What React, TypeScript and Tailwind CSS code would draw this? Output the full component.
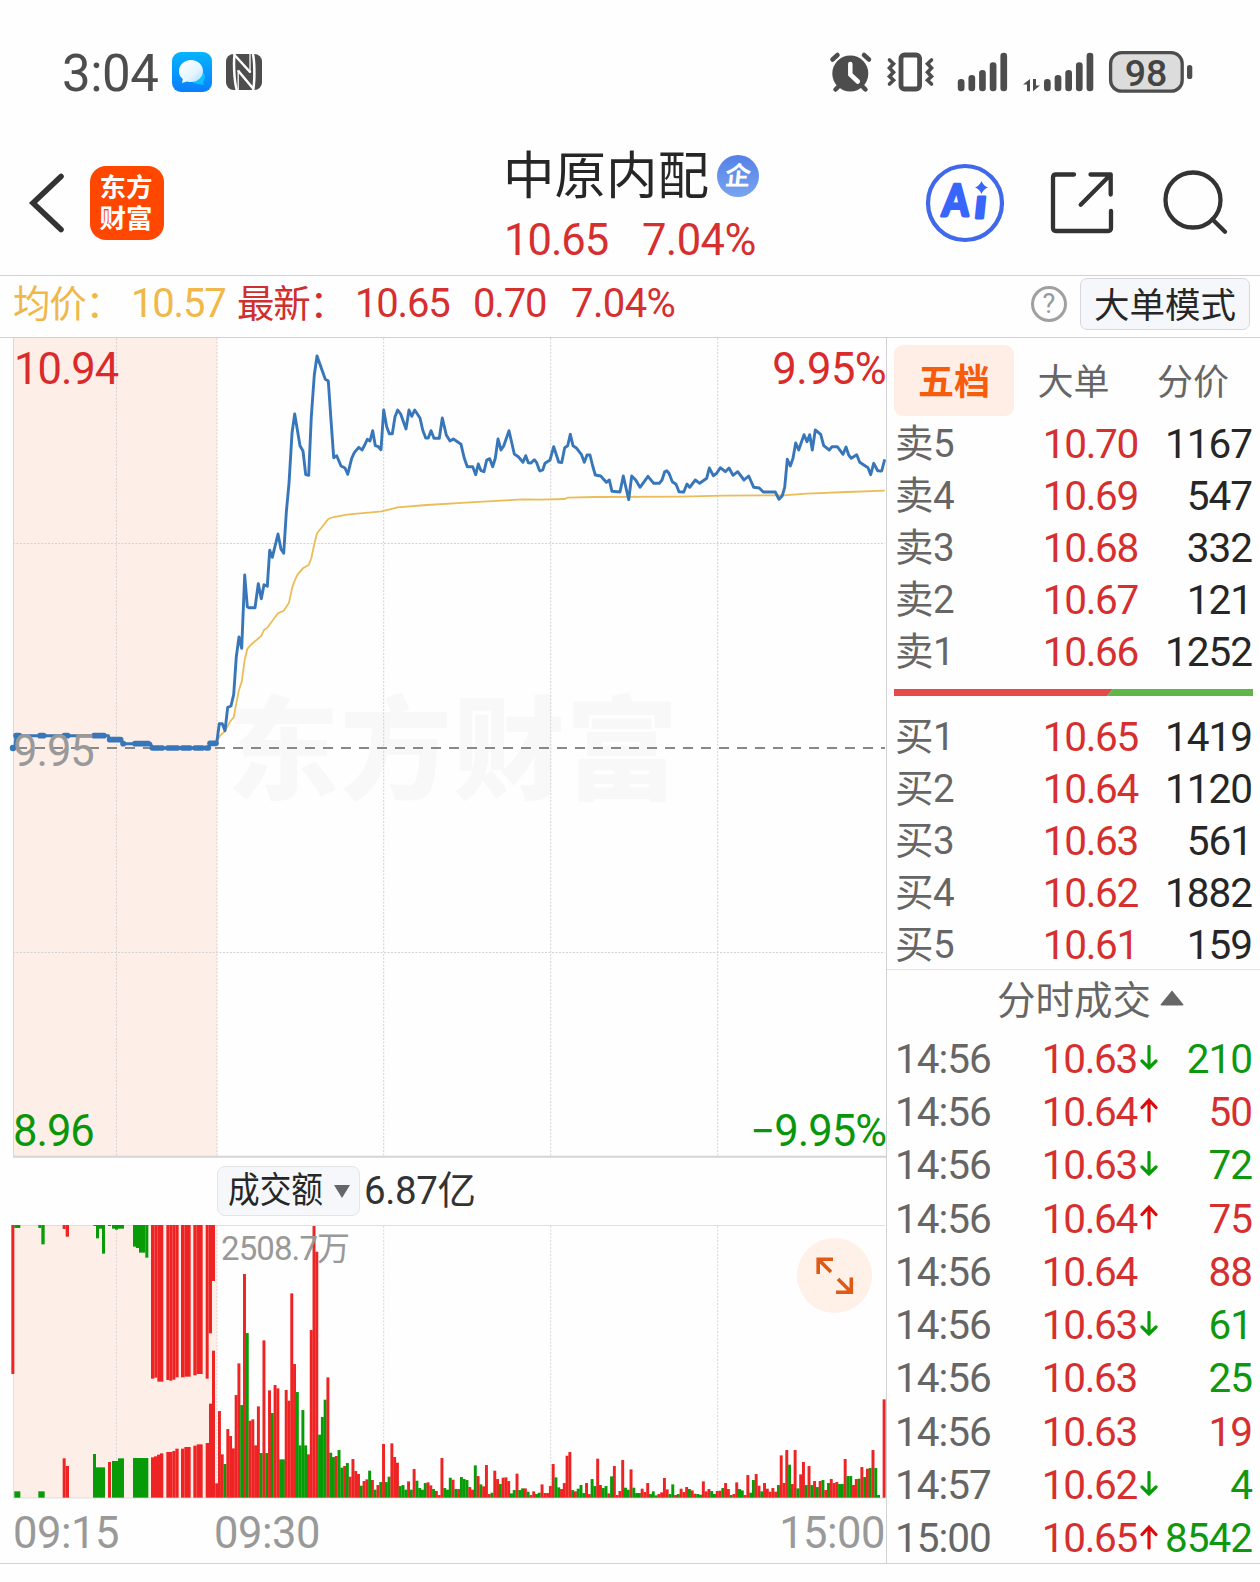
import React from 'react';

type Side = 'r' | 'g';

const RED = '#ee2424';
const GREEN = '#079c07';

/* ---------- price series: pairs measured in thirds of a pixel ---------- */

const OPEN_PRICE =
  '50,1209 58,1151 67,1151 75,1172 83,1102 93,1098 101,1063 109,950 117,891 125,925 134,705 142,800 147,803 165,803 175,731 184,776 192,734 202,739 209,631 217,652 234,582 243,628 251,640 259,517 267,430 276,280 284,222 300,317 309,333 317,404 326,406 334,230 343,105 351,48 376,118 385,123 393,240 401,353 410,347 423,378 435,384 443,403 455,355 463,338 476,322 486,330 494,315 502,298 510,303 518,272 526,317 535,320 543,329 551,210 560,260 568,281 577,281 585,230 593,210 602,222 618,267 627,210 635,229 644,210 660,234 668,270 677,294 685,294 693,272 702,295 718,295 727,234 739,285 750,303 760,297 770,304 783,313 793,355 802,380 818,380 827,404 835,372 843,392 852,395 860,360 869,356 878,380 886,355 894,297 903,330 911,318 927,272 943,342 955,350 969,367 977,347 985,368 993,369 1003,359 1010,368 1018,390';
const LATE_PRICE =
  '0,213 8,210 15,190 30,180 41,140 56,186 65,188 74,143 83,137 91,103 99,137 110,145 124,163 133,187 141,165 150,165 158,198 166,225 182,228 199,247 208,240 216,274 240,276 250,228 266,299 275,228 287,240 300,262 324,229 341,250 358,250 366,240 374,215 380,212 387,220 397,245 408,253 417,275 431,276 441,252 449,262 466,240 479,250 500,235 508,204 520,227 530,220 541,203 556,215 567,204 579,226 593,215 612,240 626,228 641,262 658,264 670,276 706,276 717,298 727,287 734,262 742,178 751,198 759,175 767,129 776,150 792,104 801,125 809,104 817,150 826,90 842,103 851,137 868,150 876,140 892,140 909,163 918,141 926,165 934,175 950,164 959,187 984,203 992,224 1001,190 1013,212 1025,213 1034,178';
const OPEN_AVG =
  '50,1205 60,1187 76,1172 90,1145 101,1132 109,1090 117,1050 125,1025 134,960 142,927 155,912 184,888 192,870 202,863 234,820 251,812 267,788 276,745 284,722 293,703 309,685 326,675 334,655 343,612 351,580 385,537 401,531 440,524 545,514 593,502 680,495 810,487 970,478';
const LATE_AVG = '0,299 74,297 83,293 166,291 420,290 550,287 730,286 800,281 920,276 1034,272';

const place = (pairs: string, x0: number, y0: number) =>
  pairs
    .split(' ')
    .map((p) => {
      const [x, y] = p.split(',').map(Number);
      return `${(x0 + x / 3).toFixed(1)},${(y0 + y / 3).toFixed(1)}`;
    })
    .join(' ');

const priceLine = place(OPEN_PRICE, 200, 340) + ' ' + place(LATE_PRICE, 540, 400);
const avgLine = place(OPEN_AVG, 200, 340) + ' ' + place(LATE_AVG, 540, 400);
const auctionLine = place(
  '45,264 48,227 325,227 329,239 363,239 370,251 452,251 457,264 625,264 630,250 652,250',
  0,
  660,
);
const auctionDots: [number, number, number][] = [
  [48, 58, 227], [120, 131, 227], [193, 203, 227], [282, 312, 227], [329, 362, 239], [369, 370, 251],
  [405, 445, 251], [457, 487, 264], [503, 533, 264], [547, 570, 264], [585, 608, 264], [619, 625, 264], [630, 648, 250],
];

/* ---------- volume bars ---------- */

const MORNING =
  'r1000 r783 r913 g942 r837 r858 r895 r735 r640 g765 r372 g549 r812 r808 r886 r769 g909 r571 g909 r721 g789 r705 r715 g928 g928 r720 r752 r430 r642 g726 g886 g780 g886 r913 r540 r228 r305 g854 g801 g749 r682 g908 g921 r918 g900 g953 r948 g939 r980 r927 r963 r972 g1007 r993 r988 g962 r990 g1019 r1005 g996 r882 g996 g980 r880 r921 r938 g1008 g1005 g1019 r994 g1019 r957 g992 g1014 g1019 g999 r997 r1006 g1017 r1023 r1035 r924 g1014 g1019 g983 r989 g1017 r1017 g981 g987 g990 r1011 r1019 g946 r978 g1003 r1009 r945 r1032 g1028 r962 r987 g1002 r983 r982 r993 g1030 g1020 r971 g1020 g1015 r1015 g1025 r1035';
const AFTERNOON =
  'r874 g882 g878 r853 r879 r879 r858 r792 g832 g862 r867 r849 r767 r756 g870 r874 g866 g855 g879 r849 r882 g837 g858 r776 r855 g864 g858 r880 g829 r798 r885 r873 r780 g863 g869 r808 g863 g879 g879 r866 r876 r849 g882 g874 g886 r882 r877 r834 r868 g882 g853 r885 g882 r866 r876 r861 g867 r871 r881 g882 g884 r844 r874 r867 g873 g882 r873 r872 g864 r849 r867 g885 r882 r847 g867 g871 r885 r825 g878 g840 r822 r857 g874 r849 r866 r875 r864 r875 g855 r766 r849 r750 g794 r852 r750 g865 r823 r786 g855 r798 g855 r843 g861 r843 g840 r870 g849 r837 r849 r846 g852 g852 r777 g828 g828 r855 r837 g836 r801 g831 r806 g804 r750 g804 g885 r893 r598';

const parse = (s: string, base: number) =>
  s.split(' ').map((t) => ({ side: t[0] as Side, h: (base - Number(t.slice(1))) / 3 }));
const bars = [...parse(MORNING, 1043), ...parse(AFTERNOON, 893)];

/* auction: [left, right, edge, side] in thirds of a pixel */
const HANGING: [number, number, number, Side][] = [
  [34, 43, 672, 'r'], [43, 61, 234, 'g'], [115, 124, 234, 'g'], [124, 134, 283, 'g'], [188, 197, 237, 'r'], [197, 207, 260, 'r'],
  [280, 288, 228, 'g'], [288, 297, 265, 'g'], [297, 306, 236, 'g'], [306, 315, 311, 'g'], [324, 333, 228, 'r'], [336, 345, 236, 'g'],
  [345, 354, 239, 'g'], [354, 372, 236, 'g'], [399, 408, 290, 'g'], [408, 417, 294, 'g'], [417, 436, 308, 'g'], [436, 445, 323, 'g'],
  [453, 463, 686, 'r'], [463, 472, 683, 'r'], [472, 490, 695, 'r'], [499, 508, 690, 'r'], [508, 517, 692, 'r'], [517, 526, 689, 'r'],
  [526, 536, 682, 'r'], [543, 554, 682, 'r'], [554, 572, 680, 'r'], [580, 590, 676, 'r'], [590, 608, 672, 'r'], [617, 626, 686, 'r'],
  [626, 636, 550, 'r'], [636, 645, 393, 'r'],
];
const STANDING: [number, number, number, Side][] = [
  [43, 61, 1024, 'g'], [115, 134, 1024, 'g'], [188, 197, 925, 'r'], [197, 207, 948, 'r'], [279, 288, 912, 'g'], [288, 315, 952, 'g'],
  [324, 333, 936, 'r'], [336, 354, 933, 'g'], [354, 372, 925, 'g'], [399, 445, 924, 'g'], [453, 462, 922, 'r'], [462, 471, 919, 'r'],
  [471, 480, 914, 'r'], [480, 490, 910, 'r'], [499, 517, 906, 'r'], [517, 526, 903, 'r'], [526, 536, 896, 'r'], [543, 553, 896, 'r'],
  [553, 572, 891, 'r'], [580, 590, 887, 'r'], [590, 608, 883, 'r'], [617, 627, 879, 'r'], [627, 636, 761, 'r'], [636, 645, 602, 'r'],
];

const asks = [
  ['卖5', '10.70', '1167'], ['卖4', '10.69', '547'], ['卖3', '10.68', '332'], ['卖2', '10.67', '121'], ['卖1', '10.66', '1252'],
];
const bids = [
  ['买1', '10.65', '1419'], ['买2', '10.64', '1120'], ['买3', '10.63', '561'], ['买4', '10.62', '1882'], ['买5', '10.61', '159'],
];
const ticks: [string, string, '' | 'up' | 'down', string, Side][] = [
  ['14:56', '10.63', 'down', '210', 'g'],
  ['14:56', '10.64', 'up', '50', 'r'],
  ['14:56', '10.63', 'down', '72', 'g'],
  ['14:56', '10.64', 'up', '75', 'r'],
  ['14:56', '10.64', '', '88', 'r'],
  ['14:56', '10.63', 'down', '61', 'g'],
  ['14:56', '10.63', '', '25', 'g'],
  ['14:56', '10.63', '', '19', 'r'],
  ['14:57', '10.62', 'down', '4', 'g'],
  ['15:00', '10.65', 'up', '8542', 'g'],
];

/* ---------- status bar ---------- */

function SignalBars({ x }: { x: number }) {
  const tops = [79, 75, 70, 62.3, 52.7];
  return (
    <g fill="#4d4d4d">
      {tops.map((t, i) => (
        <rect key={i} x={x + i * 10.65} y={t} width="6.7" height={91.3 - t} rx="3.2" />
      ))}
    </g>
  );
}

function StatusBar() {
  return (
    <div className="flex h-[132px] items-start justify-between pt-[43px] pl-[62px] pr-[62px]">
      <div className="flex items-center">
        <span className="w-[110px] pt-[2px] text-[51px] leading-[58px] tracking-[-0.5px] text-[#4d4d4d]">3:04</span>
        <svg width="40" height="40" viewBox="0 0 40 40" className="mb-[3px]">
          <defs>
            <linearGradient id="msg" x1="0" y1="0" x2="0" y2="1">
              <stop offset="0" stopColor="#06b4fd" />
              <stop offset="1" stopColor="#0a7dfb" />
            </linearGradient>
            <linearGradient id="bubble" x1="0" y1="0" x2="1" y2="1">
              <stop offset="0" stopColor="#ffffff" />
              <stop offset="0.6" stopColor="#e6f5ff" />
              <stop offset="1" stopColor="#a5dcff" />
            </linearGradient>
          </defs>
          <rect width="40" height="40" rx="9" fill="url(#msg)" />
          <path d="M31 20a8 8 0 0 1 0 10l1 3-5-1c-3 0-6-1-8-3z" fill="#0cc0ff" />
          <path d="M19 8c7 0 12 5 12 11s-5 11-12 11c-1.500 0-2.500 0-4-.5L10 31l.8-4C8 25 7 22 7 19 7 13 12 8 19 8z" fill="url(#bubble)" />
        </svg>
        <svg width="36" height="36" viewBox="0 0 36 36" className="mb-[3px] ml-[14px]">
          <rect width="36" height="36" rx="7.500" fill="#4d4d4d" />
          <g fill="none" stroke="#fff" strokeWidth="2.500">
            <path d="M8.500 0C7.600 9 8 27 10.800 36" />
            <path d="M27 0C28.800 9 28.800 27 27.200 36" />
            <path d="M8.500 1L24.500 18.500M12 16.500L27.500 35" />
            <path d="M12.200 16V36M24 0V19" strokeWidth="1.300" />
          </g>
        </svg>
      </div>
      <svg width="370" height="56" viewBox="828 43 370 56">
        <g stroke="#4d4d4d" strokeLinecap="round" fill="none">
          <circle cx="850.300" cy="73.500" r="18" fill="#4d4d4d" stroke="none" />
          <path d="M832.500 59.500l5-4.500M869 59.500l-5-4.500" strokeWidth="4.500" />
          <path d="M839 86l-3.500 3.500M862 86l3.500 3.500" strokeWidth="4.500" />
          <path d="M850.300 64v10.500l7.500 7" stroke="#fff" strokeWidth="4.500" />
          <rect x="901" y="55" width="18.600" height="34" rx="3.500" strokeWidth="4.800" />
          <path d="M889.500 60l4 3.800-4 4.200 4 4.200-4 4.200 4 3.800-4 3.800M931.500 60l-4 3.800 4 4.200-4 4.200 4 4.200-4 3.800 4 3.800" strokeWidth="3.600" />
        </g>
        <SignalBars x={957.8} />
        <SignalBars x={1044} />
        <g fill="#4d4d4d">
          <path d="M1030 79V91.300h-3V84.500h-4z" />
          <path d="M1033 79h3v6.500h4L1033 91.300z" />
        </g>
        <rect x="1110.600" y="52.600" width="71.600" height="38.600" rx="11" fill="#dcdcdc" stroke="#4d4d4d" strokeWidth="3.300" />
        <rect x="1187" y="65" width="5.300" height="14" rx="2.600" fill="#4d4d4d" />
        <text x="1146" y="86" textAnchor="middle" fontSize="37.500" fontWeight="500" fill="#444" fontFamily="Roboto">
          98
        </text>
      </svg>
    </div>
  );
}

/* ---------- title bar ---------- */

function TitleBar() {
  return (
    <header className="grid h-[144px] grid-cols-[1fr_auto_1fr] border-b border-[#d0d1d3]">
      <div className="flex items-start pt-[34px] pl-[28px]">
        <svg width="38" height="74" viewBox="28 166 38 74" className="mr-[24px]">
          <path d="M61 176.500L33 203l28 26.500" fill="none" stroke="#333" strokeWidth="5.600" strokeLinecap="round" />
        </svg>
        <div className="flex h-[74px] w-[74px] flex-col items-center justify-center rounded-[16px] bg-[#ff4700] pr-[2px] text-[26.5px] leading-[31.5px] font-bold text-white">
          <span>东方</span>
          <span>财富</span>
        </div>
      </div>
      <div className="flex w-[254px] flex-col pt-[12px]">
        <div className="flex items-center">
          <h1 className="text-[51.5px] leading-[66px] whitespace-nowrap text-[#262626]">中原内配</h1>
          <span className="mb-[3px] ml-[8px] flex h-[42px] w-[42px] shrink-0 items-center justify-center rounded-full bg-linear-to-b from-[#5580e6] to-[#78a4ef] text-[26px] leading-none font-bold text-white">
            <span className="-skew-x-6">企</span>
          </span>
        </div>
        <div className="mt-[3px] flex pl-[1px] text-[43.5px] leading-[56px] tracking-[-1px] text-[#d62f2f]">
          <span className="w-[138px]">10.65</span>
          <span className="tracking-[-0.6px]">7.04%</span>
        </div>
      </div>
      <svg width="316" height="90" viewBox="918 158 316 90" className="mt-[26px] mr-[26px] justify-self-end">
        <circle cx="965" cy="203" r="37" fill="none" stroke="#3f68ea" strokeWidth="4.200" />
        <g fill="#3866fb" stroke="#3866fb" strokeWidth="2.800" strokeLinejoin="round" fontFamily="Lato" fontWeight="900">
          <text transform="translate(941.500 216) skewX(-4) scale(0.880 1.020)" fontSize="43">A</text>
          <text transform="translate(973.500 218) skewX(-6) scale(1.100 1)" fontSize="41">ı</text>
        </g>
        <path d="M981.500 181q1.800 4.700 6.500 6.500-4.700 1.800-6.500 6.500-1.800-4.700-6.500-6.500 4.700-1.800 6.500-6.500z" fill="#3866fb" />
        <g fill="none" stroke="#333" strokeWidth="4.300" strokeLinecap="round" strokeLinejoin="round">
          <path d="M1074 174.500h-18q-3 0-3 3V228q0 3 3 3h52q3 0 3-3v-17" />
          <path d="M1090.500 174.500H1110.700V194.500M1110.700 174.500L1080.700 204.700" />
          <circle cx="1193" cy="200" r="27.500" />
          <path d="M1212.300 219.300L1225 231.700" />
        </g>
      </svg>
    </header>
  );
}

function InfoRow() {
  return (
    <div className="flex h-[62px] items-center justify-between border-b border-[#d0d1d3] pr-[10px] pl-[13px] whitespace-nowrap">
      <div className="flex pb-[5px] text-[40px] leading-[54px] tracking-[-1.2px]">
        <span className="w-[118px] text-[37.5px] text-[#f0b84a]">均价：</span>
        <span className="w-[106px] text-[#f0b84a]">10.57</span>
        <span className="w-[118px] text-[37.5px] text-[#d02f2f]">最新：</span>
        <span className="w-[118px] text-[#d62f2f]">10.65</span>
        <span className="w-[98px] text-[#d62f2f]">0.70</span>
        <span className="tracking-[-0.6px] text-[#d62f2f]">7.04%</span>
      </div>
      <div className="flex items-center pb-[5px]">
        <span className="mr-[13px] flex h-[36px] w-[36px] items-center justify-center rounded-full border-[3px] border-[#a0a0a0] text-[27px] leading-none text-[#999]">?</span>
        <button className="h-[52px] w-[170px] rounded-[7px] border border-[#d5d9df] bg-[#f6f7fa] pt-[2px] text-[35.5px] leading-[50px] text-[#262626]">
          大单模式
        </button>
      </div>
    </div>
  );
}

/* ---------- charts ---------- */

const GRID_X = [116.5, 217, 383.7, 550.7, 717.7];

function PriceChart() {
  return (
    <div className="relative h-[820px] text-[43.5px] leading-none tracking-[-1px]">
      <svg width="886" height="820" viewBox="0 338 886 820" className="block">
        <rect x="13" y="338" width="204" height="819" fill="#fdeee7" />
        <text x="227" y="791" fontSize="112" fontWeight="900" fill="#f8f8f8" fontFamily='"Noto Sans CJK SC"' textLength="450">
          东方财富
        </text>
        <g stroke="#d4d2d2" strokeWidth="1" strokeDasharray="2 1.500">
          {GRID_X.map((x) => (
            <path key={x} d={`M${x} 338V1156`} />
          ))}
          <path d="M13 543.500H885M13 952.500H885" />
        </g>
        <path d="M13.500 338V1157" stroke="#d9d6d5" />
        <path d="M13 1156.800H886" stroke="#d4d4d4" strokeWidth="2" />
        <path d="M17 748H885" stroke="#888" strokeWidth="2" strokeDasharray="10 8" />
        <polyline points={avgLine} fill="none" stroke="#ebbc57" strokeWidth="1.800" />
        <polyline points={auctionLine} fill="none" stroke="#3876ba" strokeWidth="3" />
        <circle cx="13" cy="748" r="3.200" fill="#3876ba" />
        <g stroke="#3876ba" strokeWidth="5.600" strokeLinecap="round">
          {auctionDots.map(([a, b, y]) => (
            <path key={a} d={`M${a / 3} ${660 + y / 3}H${b / 3}`} />
          ))}
        </g>
        <polyline points={priceLine} fill="none" stroke="#3876ba" strokeWidth="2.900" strokeLinejoin="round" />
      </svg>
      <span className="absolute top-[10px] left-[14px] text-[#d92b2b]">10.94</span>
      <span className="absolute top-[10px] right-0 tracking-[-0.6px] text-[#d92b2b]">9.95%</span>
      <span className="absolute top-[392px] left-[13px] text-[#999]">9.95</span>
      <span className="absolute top-[772px] left-[13px] text-[#0a960a]">8.96</span>
      <span className="absolute top-[772px] right-0 text-[#0a960a]">−9.95%</span>
    </div>
  );
}

function VolumeChart() {
  return (
    <div className="relative h-[274px]">
      <svg width="886" height="274" viewBox="0 1225 886 274" className="block">
        <rect x="13" y="1225" width="204" height="273" fill="#fdeee7" />
        <g stroke="#d9d7d7" strokeWidth="1" strokeDasharray="2 1.500">
          {GRID_X.map((x) => (
            <path key={x} d={`M${x} 1226V1498`} />
          ))}
        </g>
        <path d="M13 1225.500H885M13.500 1226V1498M13 1498H885" stroke="#e0dfdf" />
        <g>
          {HANGING.map(([a, b, y, s]) => (
            <rect key={a} x={a / 3} y="1225" width={(b - a) / 3} height={(y - 225) / 3} fill={s === 'r' ? RED : GREEN} />
          ))}
          {STANDING.map(([a, b, y, s]) => (
            <rect key={a} x={a / 3} y={1150 + y / 3} width={(b - a) / 3} height={(1043 - y) / 3} fill={s === 'r' ? RED : GREEN} />
          ))}
          {bars.map((b, i) => (
            <rect key={i} x={215.2 + i * 2.781} y={1497.7 - b.h} width="2.950" height={b.h} fill={b.side === 'r' ? RED : GREEN} />
          ))}
        </g>
      </svg>
      <span className="absolute top-[7px] left-[221px] text-[33px] leading-none tracking-[-0.9px] text-[#999]">2508.7万</span>
      <button className="absolute top-[13px] left-[797px] h-[75px] w-[75px] rounded-full bg-[#fff0e8]">
        <svg width="75" height="75" viewBox="0 0 75 75">
          <path d="M36 21.200H21.200V36M21.500 21.500L34 34M41 41L54 54M54.300 39.500V54.300H39" fill="none" stroke="#df5a14" strokeWidth="3.600" />
        </svg>
      </button>
    </div>
  );
}

function ChartColumn() {
  return (
    <section className="w-[886px]">
      <PriceChart />
      <div className="flex h-[67px] items-start pt-[8px] pl-[217px]">
        <button className="flex h-[50px] w-[143px] items-center rounded-[8px] border border-[#e3e5e9] bg-[#f6f7fa] pl-[10px]">
          <span className="w-[106px] origin-left scale-x-88 text-left text-[36px] leading-[46px] whitespace-nowrap text-[#262626]">成交额</span>
          <svg width="16" height="13" viewBox="0 0 16 13">
            <path d="M0 0h16L8 13z" fill="#666" />
          </svg>
        </button>
        <span className="ml-[4px] pt-[1px] text-[38.5px] leading-[48px] tracking-[-0.4px] text-[#333]">6.87亿</span>
      </div>
      <VolumeChart />
      <div className="flex h-[64px] pt-[2px] pl-[13px] pr-[1px] text-[43.5px] leading-[66px] tracking-[-0.5px] text-[#999]">
        <span className="w-[201px]">09:15</span>
        <span className="flex-1">09:30</span>
        <span>15:00</span>
      </div>
    </section>
  );
}

/* ---------- order book ---------- */

function BookRow({ row }: { row: string[] }) {
  return (
    <div className="flex h-[52px] items-center text-[40.5px] tracking-[-1.3px]">
      <span className="w-[100px] text-[38.5px] tracking-[-0.5px] text-[#666]">{row[0]}</span>
      <span className="w-[143px] text-right text-[#d62f2f]">{row[1]}</span>
      <span className="flex-1 text-right tracking-[-1px] text-[#262626]">{row[2]}</span>
    </div>
  );
}

function TickArrow({ dir }: { dir: 'up' | 'down' }) {
  return (
    <svg width="18" height="26" viewBox="0 0 18 26" className={dir === 'up' ? 'mb-[3px]' : 'mb-[2px]'}>
      {dir === 'up' ? (
        <path d="M9 24V3M2 10.500L9 3l7 7.500" fill="none" stroke="#dd0a0a" strokeWidth="3.200" strokeLinecap="round" />
      ) : (
        <path d="M9 1.500V23M2 16l7 7 7-7" fill="none" stroke="#079c07" strokeWidth="3.200" strokeLinecap="round" />
      )}
    </svg>
  );
}

function OrderBook() {
  return (
    <aside className="w-[374px] border-l border-[#d0d1d3] leading-[52px] whitespace-nowrap">
      <div className="flex pt-[7px] pl-[7px] text-center text-[36px] leading-[69px] text-[#666]">
        <span className="h-[71px] w-[120px] rounded-[9px] bg-[#feeee6] pt-[4px] font-bold text-[#f65c0c]">五档</span>
        <span className="w-[119px] pt-[4px]">大单</span>
        <span className="w-[120px] pt-[4px]">分价</span>
      </div>
      <div className="-mt-px h-[272px] pt-px pr-[8px] pl-[8px]">
        {asks.map((r) => (
          <BookRow key={r[0]} row={r} />
        ))}
      </div>
      <svg width="359" height="7" viewBox="0 0 359 7" className="ml-[7px] block">
        <path d="M0 0H219L213 7H0z" fill="#e34a48" />
        <path d="M219 0H359V7H213z" fill="#5fb548" />
      </svg>
      <div className="mt-[15px] h-[259px] border-b border-[#e2e3e5] pr-[8px] pl-[8px]">
        {bids.map((r) => (
          <BookRow key={r[0]} row={r} />
        ))}
      </div>
      <div className="flex h-[62px] items-center justify-center pl-[34px] text-[38.5px] text-[#666]">
        <span>分时成交</span>
        <svg width="24" height="16" viewBox="0 0 24 16" className="mb-[7px] ml-[9px]">
          <path d="M12 0.500L23.500 14.500Q23.500 15.500 22 15.500H2Q0.500 15.500 0.500 14.500z" fill="#666" />
        </svg>
      </div>
      <div className="pr-[8px] pl-[8px]">
        {ticks.map(([time, price, dir, vol, side], i) => (
          <div key={i} className="flex h-[53.3px] items-center text-[40.5px] tracking-[-1.3px]">
            <span className="w-[100px] tracking-[-1px] text-[#666]">{time}</span>
            <span className="w-[142px] text-right text-[#d62f2f]">{price}</span>
            <span className="flex w-[21px] justify-center pl-[3px]">{dir && <TickArrow dir={dir} />}</span>
            <span className={side === 'r' ? 'flex-1 text-right tracking-[-1px] text-[#d62f2f]' : 'flex-1 text-right tracking-[-1px] text-[#0f980f]'}>{vol}</span>
          </div>
        ))}
      </div>
    </aside>
  );
}

export default function App() {
  return (
    <main className="h-[1582px] w-[1260px] overflow-hidden bg-[#fefefe] font-[Roboto,'Noto_Sans_CJK_SC',sans-serif]">
      <StatusBar />
      <TitleBar />
      <InfoRow />
      <div className="flex h-[1226px] border-b border-[#d0d1d3]">
        <ChartColumn />
        <OrderBook />
      </div>
    </main>
  );
}
